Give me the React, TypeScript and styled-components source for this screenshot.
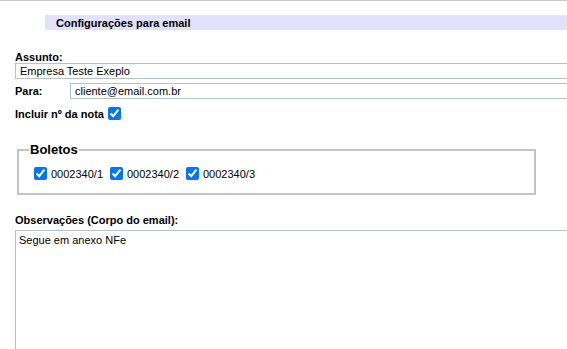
import React from "react";
import styled, { createGlobalStyle } from "styled-components";

const Global = createGlobalStyle`
  html, body { margin: 0; padding: 0; background: #fff; }
  body { font-family: "Liberation Sans", Arial, sans-serif; color: #000; overflow: hidden; }
`;

const Page = styled.div`
  width: 567px;
  height: 349px;
  overflow: hidden;
  border-top: 1px solid #c8c8c8;
  box-sizing: border-box;
`;

const HeaderBar = styled.div`
  margin: 14px 0 0 45px;
  height: 15px;
  background: #e1e1fb;
  display: flex;
  align-items: center;
  padding-left: 11px;
  font-size: 11px;
  font-weight: bold;
`;

const Form = styled.div`
  display: flex;
  flex-direction: column;
  padding: 21px 0 0 15px;
`;

const Label = styled.label<{ $top?: number }>`
  font-size: 11px;
  font-weight: bold;
  line-height: 12px;
  display: block;
  margin-top: ${(p) => p.$top ?? 0}px;
`;

const TextInput = styled.input`
  display: block;
  flex-shrink: 0;
  box-sizing: border-box;
  width: 640px;
  height: 16px;
  margin: 0;
  padding: 0 0 0 4px;
  border: 1px solid #b3c4cc;
  font-family: "Liberation Sans", Arial, sans-serif;
  font-size: 11px;
  color: #000;
  outline: none;
`;

const Row = styled.div<{ $top?: number }>`
  display: flex;
  align-items: center;
  margin-top: ${(p) => p.$top ?? 0}px;
`;

const RowLabel = styled(Label)<{ $w?: number }>`
  width: ${(p) => p.$w ?? 55}px;
  flex-shrink: 0;
`;

const Check = styled.input.attrs({ type: "checkbox" })`
  width: 13px;
  height: 13px;
  margin: 0 0 0 4px;
  accent-color: #0075ff;
`;

const Fieldset = styled.fieldset`
  margin: 22px 0 0 2px;
  width: 519px;
  box-sizing: border-box;
  border: 2px solid #c4c4c4;
  padding: 9px 0 13px 15px;
  display: flex;
  gap: 7px;
`;

const Legend = styled.legend`
  font-size: 13px;
  font-weight: bold;
  padding: 0 1px;
  margin-left: -5px;
  line-height: 16px;
`;

const BoletoItem = styled.label`
  display: flex;
  align-items: center;
  font-size: 11px;
  gap: 4px;
  & > input { margin: 0; }
`;

const TextArea = styled.textarea`
  display: block;
  box-sizing: border-box;
  width: 640px;
  height: 160px;
  margin: 4px 0 0 0;
  padding: 3px 3px;
  border: 1px solid #b3c4cc;
  font-family: "Liberation Sans", Arial, sans-serif;
  font-size: 11px;
  color: #000;
  resize: none;
  outline: none;
`;

const boletos = ["0002340/1", "0002340/2", "0002340/3"];

export default function App() {
  return (
    <>
      <Global />
      <Page>
        <HeaderBar>Configurações para email</HeaderBar>
        <Form>
          <Label>Assunto:</Label>
          <TextInput defaultValue="Empresa Teste Exeplo" readOnly />
          <Row $top={4}>
            <RowLabel $w={55}>Para:</RowLabel>
            <TextInput defaultValue="cliente@email.com.br" readOnly />
          </Row>
          <Row $top={8}>
            <Label>Incluir nº da nota</Label>
            <Check defaultChecked />
          </Row>
          <Fieldset>
            <Legend>Boletos</Legend>
            {boletos.map((b) => (
              <BoletoItem key={b}>
                <Check defaultChecked />
                {b}
              </BoletoItem>
            ))}
          </Fieldset>
          <Label $top={19}>Observações (Corpo do email):</Label>
          <TextArea defaultValue="Segue em anexo NFe" readOnly />
        </Form>
      </Page>
    </>
  );
}
